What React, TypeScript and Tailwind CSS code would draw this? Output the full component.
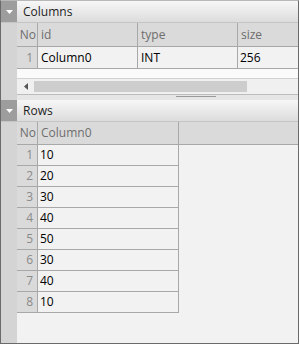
import React from "react";

const font = { fontFamily: '"Open Sans", "Noto Sans", sans-serif' };

function SectionHeader({ title }: { title: string }) {
  return (
    <div className="flex h-[22px] border-b border-[#c4c4c4]">
      <div className="w-[16px] bg-[#9d9d9d] flex items-center justify-center">
        <svg width="7" height="4" viewBox="0 0 7 4">
          <path d="M0 0 L7 0 L3.5 4 Z" fill="#ffffff" />
        </svg>
      </div>
      <div className="flex-1 flex items-center pl-[6px] text-[12px] text-[#1e1e1e] bg-gradient-to-b from-[#f7f7f7] to-[#dcdcdc]">
        {title}
      </div>
    </div>
  );
}

const rows = [10, 20, 30, 40, 50, 30, 40, 10];

export default function App() {
  return (
    <div
      style={font}
      className="w-[299px] h-[344px] flex flex-col border border-[#6a6a6a] border-t-[#b8b8b8] bg-[#f2f2f2] text-[12px] overflow-hidden"
    >
      <SectionHeader title="Columns" />
      <div className="flex">
        <div className="w-[16px] bg-[#d4d4d4]" />
        <div className="flex-1 flex flex-col">
          {/* header */}
          <div className="flex h-[24px] bg-[#dadada] text-[#6e6e6e] border-b border-[#a8a8a8]">
            <div className="w-[21px] border-r border-[#a8a8a8] flex items-center justify-end pr-[1px]">No</div>
            <div className="w-[100px] border-r border-[#a8a8a8] flex items-center pl-[3px]">id</div>
            <div className="w-[100px] border-r border-[#a8a8a8] flex items-center pl-[3px]">type</div>
            <div className="flex-1 flex items-center pl-[3px]">size</div>
          </div>
          <div className="flex h-[22px] bg-[#f2f2f2] border-b border-[#a8a8a8]">
            <div className="w-[21px] bg-[#dadada] border-r border-[#a8a8a8] flex items-center justify-end pr-[4px] text-[#8a8a8a]">1</div>
            <div className="w-[100px] border-r border-[#a8a8a8] flex items-center pl-[3px] text-black">Column0</div>
            <div className="w-[100px] border-r border-[#a8a8a8] flex items-center pl-[3px] text-black">INT</div>
            <div className="flex-1 flex items-center pl-[2px] text-black">256</div>
          </div>
          <div className="h-[9px] bg-[#fafafa]" />
          {/* scrollbar */}
          <div className="h-[16px] border-t border-[#d2d2d2] bg-[#f0f0f0] flex items-center">
            <div className="w-[17px] flex items-center justify-center">
              <svg width="4" height="7" viewBox="0 0 4 7">
                <path d="M4 0 L0 3.5 L4 7 Z" fill="#555555" />
              </svg>
            </div>
            <div className="w-[213px] h-[11px] bg-[#cdcdcd]" />
          </div>
        </div>
      </div>
      {/* splitter */}
      <div className="flex h-[6px]">
        <div className="w-[16px] bg-[#d4d4d4]" />
        <div className="flex-1 border-t border-[#bcbcbc] bg-[#e6e6e6] relative">
          <div className="absolute left-[159px] top-[1px] w-[40px] h-px bg-[#9a9a9a]" />
        </div>
      </div>
      <SectionHeader title="Rows" />
      <div className="flex flex-1">
        <div className="w-[16px] bg-[#d4d4d4]" />
        <div className="flex-1 flex flex-col">
          <div className="flex">
            <div className="flex flex-col border-r border-[#a8a8a8]">
              <div className="flex h-[23px] bg-[#dadada] text-[#6e6e6e] border-b border-[#a8a8a8]">
                <div className="w-[21px] border-r border-[#a8a8a8] flex items-center justify-end pr-[1px]">No</div>
                <div className="w-[140px] flex items-center pl-[3px]">Column0</div>
              </div>
              {rows.map((v, i) => (
                <div key={i} className="flex h-[21px] border-b border-[#a8a8a8]">
                  <div className="w-[21px] bg-[#dadada] border-r border-[#a8a8a8] flex items-center justify-end pr-[4px] text-[#8a8a8a]">
                    {i + 1}
                  </div>
                  <div className="w-[140px] flex items-center pl-[2px] text-black">{v}</div>
                </div>
              ))}
            </div>
            <div className="flex-1 h-[23px] bg-[#dadada] border-b border-[#a8a8a8]" />
          </div>
        </div>
      </div>
    </div>
  );
}
